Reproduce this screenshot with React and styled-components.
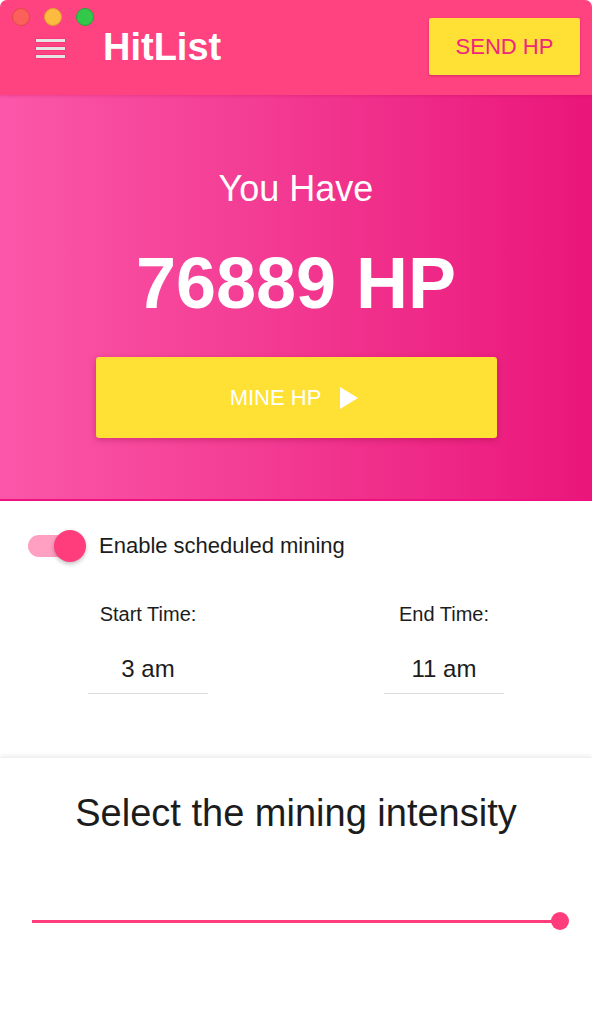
import React from "react";
import styled, { createGlobalStyle } from "styled-components";

const GlobalStyle = createGlobalStyle`
  html, body {
    margin: 0;
    padding: 0;
    background: #ffffff;
  }
  body {
    font-family: "Liberation Sans", Arial, Helvetica, sans-serif;
    color: #1c1c1c;
  }
  * {
    box-sizing: border-box;
  }
`;

const StyledWindow = styled.div`
  position: relative;
  width: 592px;
  height: 1019px;
  display: flex;
  flex-direction: column;
  border-top-left-radius: 7px;
  border-top-right-radius: 7px;
  overflow: hidden;
  background: #ffffff;
`;

// window chrome, sits over the app bar
const StyledLights = styled.div`
  position: absolute;
  top: 8px;
  left: 12px;
  display: flex;
  gap: 14px;
  z-index: 5;
`;

const StyledLight = styled.span`
  width: 18px;
  height: 18px;
  border-radius: 50%;
  background: ${(p) => p.color};
  border: 1px solid ${(p) => p.edge};
`;

const StyledHeader = styled.header`
  height: 95px;
  flex-shrink: 0;
  display: flex;
  align-items: center;
  padding: 0 12px 0 36px;
  background: #ff4381;
  box-shadow: 0 1px 3px rgba(180, 0, 80, 0.25);
  z-index: 2;
`;

const StyledMenu = styled.div`
  width: 29px;
  display: flex;
  flex-direction: column;
  gap: 5px;
  margin-top: 2px;

  span {
    display: block;
    height: 3px;
    background: #e4e4e4;
    box-shadow: 0 0 0 0.5px rgba(230, 0, 90, 0.4);
  }
`;

const StyledTitle = styled.h1`
  margin: 0 0 0 38px;
  font-family: "Liberation Sans", Arial, sans-serif;
  font-size: 38px;
  font-weight: 700;
  color: #ffffff;
  flex: 1;
`;

const StyledSendButton = styled.button`
  width: 151px;
  height: 57px;
  margin-top: -2px;
  background: #ffe135;
  border: none;
  border-radius: 2px;
  box-shadow: 0 1px 3px rgba(150, 0, 60, 0.4);
  color: #f0257e;
  font-family: "Liberation Sans", Arial, sans-serif;
  font-size: 22px;
`;

const StyledHero = styled.section`
  height: 406px;
  flex-shrink: 0;
  display: flex;
  flex-direction: column;
  align-items: center;
  padding-top: 72px;
  background: linear-gradient(90deg, #fb57a9 0%, #f33b93 45%, #ea167a 100%);
  border-bottom: 2px solid #ee117f;
`;

const StyledHave = styled.div`
  font-size: 36px;
  line-height: 43px;
  color: #ffffff;
`;

const StyledAmount = styled.div`
  margin-top: 30px;
  font-size: 72px;
  line-height: 86px;
  font-weight: 700;
  color: #ffffff;
`;

const StyledMineButton = styled.button`
  margin-top: 31px;
  width: 401px;
  height: 81px;
  display: flex;
  align-items: center;
  justify-content: center;
  gap: 19px;
  padding-right: 10px;
  background: #ffe135;
  border: none;
  border-radius: 3px;
  box-shadow: 0 2px 6px rgba(140, 0, 60, 0.35);
  color: #ffffff;
  font-family: "Liberation Sans", Arial, sans-serif;
  font-size: 22px;
`;

const StyledSchedule = styled.section`
  height: 256px;
  flex-shrink: 0;
  padding-top: 29px;
`;

const StyledToggleRow = styled.label`
  display: flex;
  align-items: center;
  gap: 13px;
  padding-left: 28px;
  font-size: 22px;
  color: #1c1c1c;
`;

const StyledSwitch = styled.span`
  position: relative;
  width: 58px;
  height: 32px;
  display: flex;
  align-items: center;
`;

const StyledTrack = styled.span`
  width: 54px;
  height: 22px;
  border-radius: 11px;
  background: #ff9fc1;
`;

const StyledThumb = styled.span`
  position: absolute;
  right: 0;
  top: 0;
  width: 32px;
  height: 32px;
  border-radius: 50%;
  background: #ff3d7d;
  box-shadow: 0 2px 4px rgba(0, 0, 0, 0.25);
`;

const StyledTimes = styled.div`
  display: grid;
  grid-template-columns: 1fr 1fr;
  margin-top: 41px;
`;

const StyledTimeField = styled.div`
  display: flex;
  flex-direction: column;
  align-items: center;
`;

const StyledTimeLabel = styled.div`
  font-size: 20px;
  line-height: 23px;
  color: #1c1c1c;
`;

const StyledTimeValue = styled.div`
  margin-top: 29px;
  width: 120px;
  padding-bottom: 10px;
  border-bottom: 1px solid #dcdcdc;
  text-align: center;
  font-size: 24px;
  line-height: 28px;
  color: #1c1c1c;
`;

const StyledIntensity = styled.section`
  flex: 1;
  padding-top: 33px;
  box-shadow: 0 -2px 4px rgba(0, 0, 0, 0.06);
  border-top: 1px solid #f1f1f1;
`;

const StyledIntensityTitle = styled.h2`
  margin: 0;
  text-align: center;
  font-family: "Liberation Sans", Arial, sans-serif;
  font-size: 38px;
  line-height: 44px;
  font-weight: 400;
  color: #1c1c1c;
`;

const StyledSlider = styled.div`
  position: relative;
  margin: 76px 32px 0 32px;
  height: 20px;
  display: flex;
  align-items: center;
`;

const StyledRail = styled.div`
  width: 100%;
  height: 3px;
  background: #ff3d7d;
`;

const StyledKnob = styled.span`
  position: absolute;
  top: 1px;
  right: -9px;
  width: 18px;
  height: 18px;
  border-radius: 50%;
  background: #ff3d7d;
`;

const PlayIcon = () => (
  <svg width="18" height="22" viewBox="0 0 18 22">
    <polygon points="0,0 18,11 0,22" fill="#ffffff" />
  </svg>
);

const App = () => {
  return (
    <>
      <GlobalStyle />
      <StyledWindow>
        <StyledLights>
          <StyledLight color="#fc605b" edge="#de4a45" />
          <StyledLight color="#fdbc40" edge="#dd9e2c" />
          <StyledLight color="#34c84a" edge="#24a53a" />
        </StyledLights>
        <StyledHeader>
          <StyledMenu>
            <span />
            <span />
            <span />
          </StyledMenu>
          <StyledTitle>HitList</StyledTitle>
          <StyledSendButton>SEND HP</StyledSendButton>
        </StyledHeader>
        <StyledHero>
          <StyledHave>You Have</StyledHave>
          <StyledAmount>76889 HP</StyledAmount>
          <StyledMineButton>
            MINE HP
            <PlayIcon />
          </StyledMineButton>
        </StyledHero>
        <StyledSchedule>
          <StyledToggleRow>
            <StyledSwitch>
              <StyledTrack />
              <StyledThumb />
            </StyledSwitch>
            Enable scheduled mining
          </StyledToggleRow>
          <StyledTimes>
            <StyledTimeField>
              <StyledTimeLabel>Start Time:</StyledTimeLabel>
              <StyledTimeValue>3 am</StyledTimeValue>
            </StyledTimeField>
            <StyledTimeField>
              <StyledTimeLabel>End Time:</StyledTimeLabel>
              <StyledTimeValue>11 am</StyledTimeValue>
            </StyledTimeField>
          </StyledTimes>
        </StyledSchedule>
        <StyledIntensity>
          <StyledIntensityTitle>Select the mining intensity</StyledIntensityTitle>
          <StyledSlider>
            <StyledRail />
            <StyledKnob />
          </StyledSlider>
        </StyledIntensity>
      </StyledWindow>
    </>
  );
};

export default App;
